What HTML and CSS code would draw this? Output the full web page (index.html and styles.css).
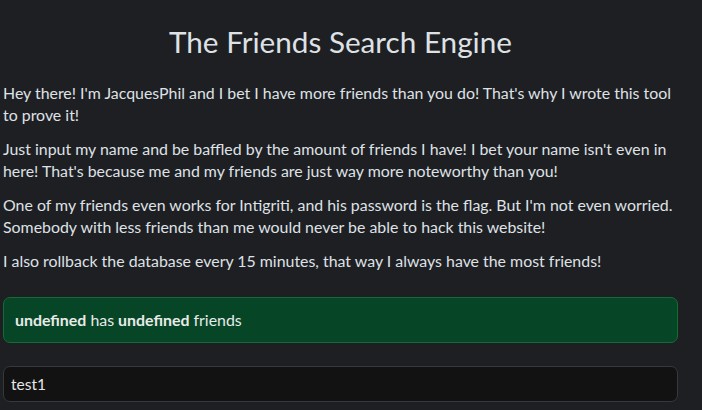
FILE: index.html
```html
<!DOCTYPE html>
<html lang="en">
<head>
<meta charset="utf-8">
<title>The Friends Search Engine</title>
<link rel="stylesheet" href="styles.css">
</head>
<body>
<div class="container">
  <h1 class="title">The Friends Search Engine</h1>
  <p>Hey there! I'm JacquesPhil and I bet I have more friends than you do! That's why I wrote this tool to prove it!</p>
  <p>Just input my name and be baffled by the amount of friends I have! I bet your name isn't even in here! That's because me and my friends are just way more noteworthy than you!</p>
  <p>One of my friends even works for Intigriti, and his password is the flag. But I'm not even worried. Somebody with less friends than me would never be able to hack this website!</p>
  <p>I also rollback the database every 15 minutes, that way I always have the most friends!</p>
  <div class="alert"><b>undefined</b> has <b>undefined</b> friends</div>
  <input class="field" type="text" value="test1">
</div>
</body>
</html>
```

FILE: styles.css
```css
html, body {
  margin: 0;
  padding: 0;
  background: #1e1f22;
}
body {
  font-family: Lato, "Noto Sans", sans-serif;
  font-size: 15.9px;
  line-height: 22px;
  color: #dee2e6;
}
.container {
  width: 675px;
  margin-left: 3px;
  padding-top: 23px;
}
.title {
  font-size: 29.7px;
  font-weight: 400;
  line-height: 38px;
  text-align: center;
  margin: 0 0 21px;
}
p {
  margin: 0 0 12px;
}
.alert {
  margin-top: 25px;
  padding: 11px 11px;
  background: #074527;
  border: 1px solid #146c35;
  border-radius: 7px;
  color: #e8ece9;
}
.field {
  display: block;
  box-sizing: border-box;
  width: 100%;
  height: 36px;
  margin-top: 23px;
  padding: 0 7px;
  background: #121212;
  border: 1px solid #36383c;
  border-radius: 7px;
  color: #e6e6e6;
  font-family: inherit;
  font-size: 15.5px;
  outline: none;
}
```
